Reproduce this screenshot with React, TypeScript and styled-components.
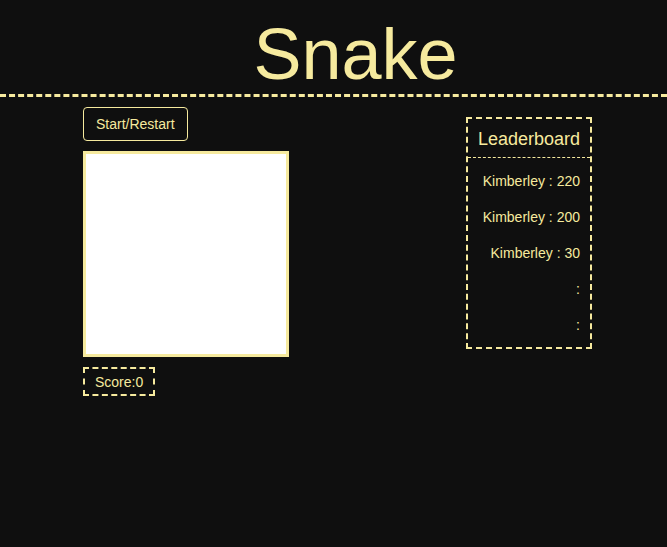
import React from 'react';
import styled, { createGlobalStyle } from 'styled-components';

const accent = '#f6ea9e';

const GlobalStyle = createGlobalStyle`
  body {
    margin: 0;
    background: #0f0f0f;
    color: ${accent};
    font-family: 'Liberation Sans', Arial, sans-serif;
  }
`;

// Header
const Header = styled.header`
  padding: 15px 0 0 44px;
  border-bottom: 3px dashed ${accent};
`;

const Title = styled.h1`
  margin: 0;
  font-size: 72px;
  font-weight: 400;
  line-height: 79px;
  text-align: center;
`;

// Main area
const Main = styled.main`
  display: flex;
  justify-content: space-between;
  align-items: flex-start;
  padding: 10px 75px 0 83px;
`;

const GameColumn = styled.section`
  display: flex;
  flex-direction: column;
  align-items: flex-start;
  gap: 10px;
`;

const StartButton = styled.button`
  padding: 8px 12px;
  background: transparent;
  color: ${accent};
  border: 1px solid ${accent};
  border-radius: 4px;
  font-family: inherit;
  font-size: 14px;
  line-height: 16px;
  cursor: pointer;
`;

const Board = styled.div`
  width: 200px;
  height: 200px;
  background: #ffffff;
  border: 3px solid ${accent};
`;

const ScoreBox = styled.div`
  padding: 5px 10px 4px;
  border: 2px dashed ${accent};
  font-size: 14px;
  line-height: 16px;
`;

// Leaderboard
const Leaderboard = styled.aside`
  width: 122px;
  margin-top: 10px;
  border: 2px dashed ${accent};
`;

const BoardTitle = styled.h2`
  margin: 0;
  padding: 10px 0 7px;
  border-bottom: 1px dashed ${accent};
  font-size: 18px;
  font-weight: 400;
  line-height: normal;
  text-align: center;
`;

const Entries = styled.ol`
  list-style: none;
  margin: 0;
  padding: 15px 10px 14px 0;
  display: flex;
  flex-direction: column;
  gap: 20px;
`;

const Entry = styled.li`
  font-size: 14px;
  line-height: 16px;
  text-align: right;
`;

const scores = [
  { name: 'Kimberley', score: '220' },
  { name: 'Kimberley', score: '200' },
  { name: 'Kimberley', score: '30' },
  { name: '', score: '' },
  { name: '', score: '' },
];

export default function App() {
  return (
    <>
      <GlobalStyle />
      <Header>
        <Title>Snake</Title>
      </Header>
      <Main>
        <GameColumn>
          <StartButton>Start/Restart</StartButton>
          <Board />
          <ScoreBox>Score:0</ScoreBox>
        </GameColumn>
        <Leaderboard>
          <BoardTitle>Leaderboard</BoardTitle>
          <Entries>
            {scores.map((s, i) => (
              <Entry key={i}>{`${s.name} : ${s.score}`}</Entry>
            ))}
          </Entries>
        </Leaderboard>
      </Main>
    </>
  );
}
